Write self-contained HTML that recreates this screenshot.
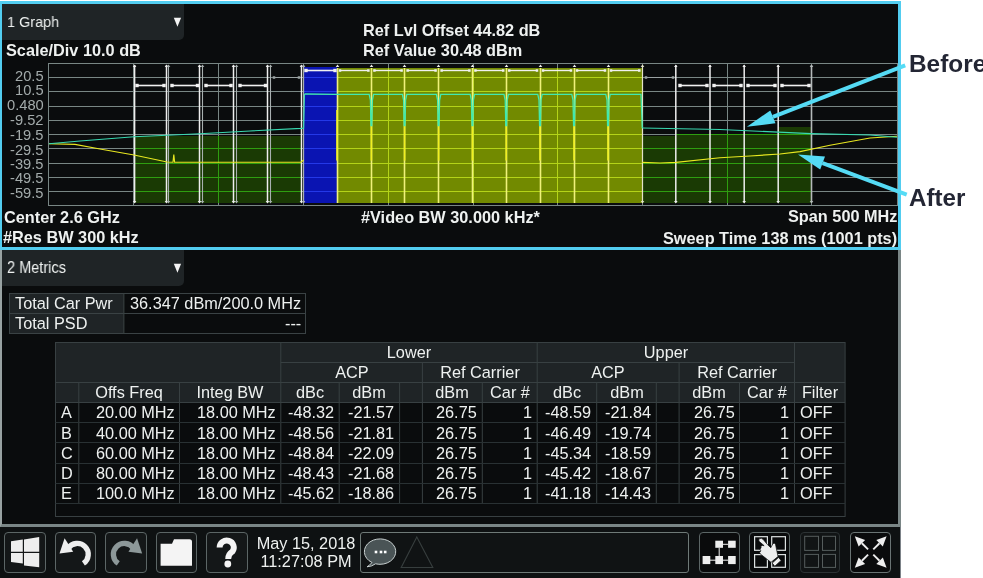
<!DOCTYPE html>
<html><head><meta charset="utf-8"><style>
html,body{margin:0;padding:0;width:983px;height:578px;overflow:hidden;background:#ffffff;position:relative;font-family:"Liberation Sans", sans-serif;}
.t{position:absolute;white-space:pre;font-family:"Liberation Sans", sans-serif;will-change:transform;}
svg{overflow:visible}
</style></head><body>
<div style="position:absolute;left:0;top:1px;width:901px;height:249px;box-sizing:border-box;border:3px solid #52cdf0;border-left-width:2px;background:#0a0c0d"></div><div style="position:absolute;left:0;top:250px;width:901px;height:277px;box-sizing:border-box;border-left:2px solid #98a2a2;border-right:3px solid #7a8686;border-bottom:3px solid #7a8686;background:#0a0c0d"></div><div style="position:absolute;left:0;top:527px;width:901px;height:51px;box-sizing:border-box;border-right:1px solid #7c8288;background:#0e1112"></div><div style="position:absolute;left:2px;top:4px;width:182px;height:36px;background:#1f2426;border-bottom-right-radius:5px"></div><div style="position:absolute;left:2px;top:250px;width:182px;height:36px;background:#1f2426;border-bottom-right-radius:5px"></div><svg style="position:absolute;left:0;top:0" width="983" height="578"><polygon points="173.8,17.7 181.1,17.7 177.45,26.8" fill="#f4f4f4"/><polygon points="173.8,263.7 181.1,263.7 177.45,272.8" fill="#f4f4f4"/></svg><div class="t" style="left:7.30px;top:14.28px;font-size:15.5px;line-height:15.5px;color:#eef1f0;transform:scaleX(0.93);transform-origin:0 0;">1 Graph</div><div class="t" style="left:7.10px;top:260.03px;font-size:15.8px;line-height:15.8px;color:#eef1f0;transform:scaleX(0.92);transform-origin:0 0;">2 Metrics</div><div class="t" style="left:5.80px;top:41.70px;font-size:16.3px;line-height:16.3px;color:#eef1f0;font-weight:bold;">Scale/Div 10.0 dB</div><div class="t" style="left:363.10px;top:21.50px;font-size:16.3px;line-height:16.3px;color:#eef1f0;font-weight:bold;">Ref Lvl Offset 44.82 dB</div><div class="t" style="left:363.10px;top:41.60px;font-size:16.3px;line-height:16.3px;color:#eef1f0;font-weight:bold;">Ref Value 30.48 dBm</div><div class="t" style="left:3.60px;top:208.60px;font-size:16.3px;line-height:16.3px;color:#eef1f0;font-weight:bold;">Center 2.6 GHz</div><div class="t" style="left:3.00px;top:229.30px;font-size:16.3px;line-height:16.3px;color:#eef1f0;font-weight:bold;">#Res BW 300 kHz</div><div class="t" style="left:361.40px;top:208.60px;font-size:16.3px;line-height:16.3px;color:#eef1f0;font-weight:bold;">#Video BW 30.000 kHz*</div><div class="t" style="right:85.60px;top:208.30px;font-size:16.3px;line-height:16.3px;color:#eef1f0;font-weight:bold;">Span 500 MHz</div><div class="t" style="right:86.40px;top:229.50px;font-size:16.3px;line-height:16.3px;color:#eef1f0;font-weight:bold;">Sweep Time 138 ms (1001 pts)</div><div class="t" style="right:939.20px;top:68.96px;font-size:14.7px;line-height:14.7px;color:#a3abab;">20.5</div><div class="t" style="right:939.20px;top:83.36px;font-size:14.7px;line-height:14.7px;color:#a3abab;">10.5</div><div class="t" style="right:939.20px;top:98.36px;font-size:14.7px;line-height:14.7px;color:#a3abab;">0.480</div><div class="t" style="right:939.20px;top:112.96px;font-size:14.7px;line-height:14.7px;color:#a3abab;">-9.52</div><div class="t" style="right:939.20px;top:127.96px;font-size:14.7px;line-height:14.7px;color:#a3abab;">-19.5</div><div class="t" style="right:939.20px;top:142.56px;font-size:14.7px;line-height:14.7px;color:#a3abab;">-29.5</div><div class="t" style="right:939.20px;top:156.96px;font-size:14.7px;line-height:14.7px;color:#a3abab;">-39.5</div><div class="t" style="right:939.20px;top:171.26px;font-size:14.7px;line-height:14.7px;color:#a3abab;">-49.5</div><div class="t" style="right:939.20px;top:186.26px;font-size:14.7px;line-height:14.7px;color:#a3abab;">-59.5</div><svg style="position:absolute;left:0;top:0" width="983" height="578"><rect x="48" y="63" width="850" height="1" fill="#788684"/><rect x="48" y="77" width="850" height="1" fill="#788684"/><rect x="48" y="91" width="850" height="1" fill="#788684"/><rect x="48" y="106" width="850" height="1" fill="#788684"/><rect x="48" y="120" width="850" height="1" fill="#788684"/><rect x="48" y="134" width="850" height="1" fill="#788684"/><rect x="48" y="148" width="850" height="1" fill="#788684"/><rect x="48" y="163" width="850" height="1" fill="#788684"/><rect x="48" y="177" width="850" height="1" fill="#788684"/><rect x="48" y="191" width="850" height="1" fill="#788684"/><rect x="48" y="205" width="850" height="1" fill="#788684"/><rect x="48" y="63" width="1" height="143" fill="#788684"/><rect x="133" y="63" width="1" height="143" fill="#788684"/><rect x="218" y="63" width="1" height="143" fill="#788684"/><rect x="303" y="63" width="1" height="143" fill="#788684"/><rect x="388" y="63" width="1" height="143" fill="#788684"/><rect x="473" y="63" width="1" height="143" fill="#788684"/><rect x="557" y="63" width="1" height="143" fill="#788684"/><rect x="642" y="63" width="1" height="143" fill="#788684"/><rect x="727" y="63" width="1" height="143" fill="#788684"/><rect x="811" y="63" width="1" height="143" fill="#788684"/><rect x="897" y="63" width="1" height="143" fill="#788684"/><rect x="134" y="136" width="167" height="67" fill="#1a3a04"/><rect x="134" y="148" width="167" height="1" fill="#2e9e10"/><rect x="134" y="163" width="167" height="1" fill="#2e9e10"/><rect x="134" y="177" width="167" height="1" fill="#2e9e10"/><rect x="134" y="191" width="167" height="1" fill="#2e9e10"/><rect x="218" y="136" width="1" height="67" fill="#2e9e10"/><rect x="643" y="136" width="33" height="67" fill="#1a3a04"/><rect x="643" y="148" width="33" height="1" fill="#2e9e10"/><rect x="643" y="163" width="33" height="1" fill="#2e9e10"/><rect x="643" y="177" width="33" height="1" fill="#2e9e10"/><rect x="643" y="191" width="33" height="1" fill="#2e9e10"/><rect x="676" y="134" width="102" height="69" fill="#1a3a04"/><rect x="676" y="134" width="102" height="1" fill="#2e9e10"/><rect x="676" y="148" width="102" height="1" fill="#2e9e10"/><rect x="676" y="163" width="102" height="1" fill="#2e9e10"/><rect x="676" y="177" width="102" height="1" fill="#2e9e10"/><rect x="676" y="191" width="102" height="1" fill="#2e9e10"/><rect x="727" y="134" width="1" height="69" fill="#2e9e10"/><rect x="778" y="127" width="33" height="76" fill="#1a3a04"/><rect x="778" y="134" width="33" height="1" fill="#2e9e10"/><rect x="778" y="148" width="33" height="1" fill="#2e9e10"/><rect x="778" y="163" width="33" height="1" fill="#2e9e10"/><rect x="778" y="177" width="33" height="1" fill="#2e9e10"/><rect x="778" y="191" width="33" height="1" fill="#2e9e10"/><rect x="304" y="67" width="33" height="136" fill="#0a14b2"/><rect x="304" y="77" width="33" height="1" fill="#2438e8"/><rect x="304" y="91" width="33" height="1" fill="#2438e8"/><rect x="304" y="106" width="33" height="1" fill="#2438e8"/><rect x="304" y="120" width="33" height="1" fill="#2438e8"/><rect x="304" y="134" width="33" height="1" fill="#2438e8"/><rect x="304" y="148" width="33" height="1" fill="#2438e8"/><rect x="304" y="163" width="33" height="1" fill="#2438e8"/><rect x="304" y="177" width="33" height="1" fill="#2438e8"/><rect x="304" y="191" width="33" height="1" fill="#2438e8"/><rect x="337" y="68" width="305" height="135" fill="#728a00"/><rect x="337" y="77" width="305" height="1" fill="#b4d418"/><rect x="337" y="91" width="305" height="1" fill="#b4d418"/><rect x="337" y="106" width="305" height="1" fill="#b4d418"/><rect x="337" y="120" width="305" height="1" fill="#b4d418"/><rect x="337" y="134" width="305" height="1" fill="#b4d418"/><rect x="337" y="148" width="305" height="1" fill="#b4d418"/><rect x="337" y="163" width="305" height="1" fill="#b4d418"/><rect x="337" y="177" width="305" height="1" fill="#b4d418"/><rect x="337" y="191" width="305" height="1" fill="#b4d418"/><rect x="388" y="68" width="1" height="135" fill="#b4d418"/><rect x="473" y="68" width="1" height="135" fill="#b4d418"/><rect x="557" y="68" width="1" height="135" fill="#b4d418"/><line x1="134.6" y1="65" x2="134.6" y2="202.5" stroke="#eeeeee" stroke-width="1.5"/><polygon points="132.79999999999998,67 136.4,67 134.6,64.5" fill="#eeeeee"/><polygon points="132.79999999999998,201 136.4,201 134.6,203.5" fill="#eeeeee"/><line x1="166.5" y1="65" x2="166.5" y2="202.5" stroke="#eeeeee" stroke-width="1.5"/><polygon points="164.7,67 168.3,67 166.5,64.5" fill="#eeeeee"/><polygon points="164.7,201 168.3,201 166.5,203.5" fill="#eeeeee"/><line x1="199.5" y1="65" x2="199.5" y2="202.5" stroke="#eeeeee" stroke-width="1.5"/><polygon points="197.7,67 201.3,67 199.5,64.5" fill="#eeeeee"/><polygon points="197.7,201 201.3,201 199.5,203.5" fill="#eeeeee"/><line x1="233.5" y1="65" x2="233.5" y2="202.5" stroke="#eeeeee" stroke-width="1.5"/><polygon points="231.7,67 235.3,67 233.5,64.5" fill="#eeeeee"/><polygon points="231.7,201 235.3,201 233.5,203.5" fill="#eeeeee"/><line x1="267.5" y1="65" x2="267.5" y2="202.5" stroke="#eeeeee" stroke-width="1.5"/><polygon points="265.7,67 269.3,67 267.5,64.5" fill="#eeeeee"/><polygon points="265.7,201 269.3,201 267.5,203.5" fill="#eeeeee"/><line x1="301.5" y1="65" x2="301.5" y2="202.5" stroke="#eeeeee" stroke-width="1.5"/><polygon points="299.7,67 303.3,67 301.5,64.5" fill="#eeeeee"/><polygon points="299.7,201 303.3,201 301.5,203.5" fill="#eeeeee"/><line x1="168.5" y1="65" x2="168.5" y2="202.5" stroke="#a8b0b0" stroke-width="1.1"/><polygon points="166.7,67 170.3,67 168.5,64.5" fill="#a8b0b0"/><polygon points="166.7,201 170.3,201 168.5,203.5" fill="#a8b0b0"/><line x1="202.5" y1="65" x2="202.5" y2="202.5" stroke="#a8b0b0" stroke-width="1.1"/><polygon points="200.7,67 204.3,67 202.5,64.5" fill="#a8b0b0"/><polygon points="200.7,201 204.3,201 202.5,203.5" fill="#a8b0b0"/><line x1="236.5" y1="65" x2="236.5" y2="202.5" stroke="#a8b0b0" stroke-width="1.1"/><polygon points="234.7,67 238.3,67 236.5,64.5" fill="#a8b0b0"/><polygon points="234.7,201 238.3,201 236.5,203.5" fill="#a8b0b0"/><line x1="270.5" y1="65" x2="270.5" y2="202.5" stroke="#a8b0b0" stroke-width="1.1"/><polygon points="268.7,67 272.3,67 270.5,64.5" fill="#a8b0b0"/><polygon points="268.7,201 272.3,201 270.5,203.5" fill="#a8b0b0"/><line x1="303.6" y1="65" x2="303.6" y2="202.5" stroke="#a8b0b0" stroke-width="1.1"/><polygon points="301.8,67 305.40000000000003,67 303.6,64.5" fill="#a8b0b0"/><polygon points="301.8,201 305.40000000000003,201 303.6,203.5" fill="#a8b0b0"/><line x1="675.8" y1="65" x2="675.8" y2="202.5" stroke="#eeeeee" stroke-width="1.5"/><polygon points="674.0,67 677.5999999999999,67 675.8,64.5" fill="#eeeeee"/><polygon points="674.0,201 677.5999999999999,201 675.8,203.5" fill="#eeeeee"/><line x1="710" y1="65" x2="710" y2="202.5" stroke="#eeeeee" stroke-width="1.5"/><polygon points="708.2,67 711.8,67 710,64.5" fill="#eeeeee"/><polygon points="708.2,201 711.8,201 710,203.5" fill="#eeeeee"/><line x1="744.2" y1="65" x2="744.2" y2="202.5" stroke="#eeeeee" stroke-width="1.5"/><polygon points="742.4000000000001,67 746.0,67 744.2,64.5" fill="#eeeeee"/><polygon points="742.4000000000001,201 746.0,201 744.2,203.5" fill="#eeeeee"/><line x1="778.2" y1="65" x2="778.2" y2="202.5" stroke="#eeeeee" stroke-width="1.5"/><polygon points="776.4000000000001,67 780.0,67 778.2,64.5" fill="#eeeeee"/><polygon points="776.4000000000001,201 780.0,201 778.2,203.5" fill="#eeeeee"/><line x1="642.5" y1="65" x2="642.5" y2="202.5" stroke="#e4e4c8" stroke-width="1.2"/><polygon points="640.7,67 644.3,67 642.5,64.5" fill="#e4e4c8"/><polygon points="640.7,201 644.3,201 642.5,203.5" fill="#e4e4c8"/><line x1="811.5" y1="65" x2="811.5" y2="202.5" stroke="#b4baba" stroke-width="1.6"/><polygon points="809.7,67 813.3,67 811.5,64.5" fill="#b4baba"/><polygon points="809.7,201 813.3,201 811.5,203.5" fill="#b4baba"/><line x1="337.5" y1="68" x2="337.5" y2="203" stroke="#f0f27a" stroke-width="1.6"/><polygon points="335.7,67 339.3,67 337.5,64.5" fill="#eeeeee"/><line x1="371.5" y1="68" x2="371.5" y2="203" stroke="#f0f27a" stroke-width="1.6"/><polygon points="369.7,67 373.3,67 371.5,64.5" fill="#eeeeee"/><line x1="404.5" y1="68" x2="404.5" y2="203" stroke="#f0f27a" stroke-width="1.6"/><polygon points="402.7,67 406.3,67 404.5,64.5" fill="#eeeeee"/><line x1="438.5" y1="68" x2="438.5" y2="203" stroke="#f0f27a" stroke-width="1.6"/><polygon points="436.7,67 440.3,67 438.5,64.5" fill="#eeeeee"/><line x1="472.5" y1="68" x2="472.5" y2="203" stroke="#f0f27a" stroke-width="1.6"/><polygon points="470.7,67 474.3,67 472.5,64.5" fill="#eeeeee"/><line x1="506.5" y1="68" x2="506.5" y2="203" stroke="#f0f27a" stroke-width="1.6"/><polygon points="504.7,67 508.3,67 506.5,64.5" fill="#eeeeee"/><line x1="540.5" y1="68" x2="540.5" y2="203" stroke="#f0f27a" stroke-width="1.6"/><polygon points="538.7,67 542.3,67 540.5,64.5" fill="#eeeeee"/><line x1="574.5" y1="68" x2="574.5" y2="203" stroke="#f0f27a" stroke-width="1.6"/><polygon points="572.7,67 576.3,67 574.5,64.5" fill="#eeeeee"/><line x1="608.5" y1="68" x2="608.5" y2="203" stroke="#f0f27a" stroke-width="1.6"/><polygon points="606.7,67 610.3,67 608.5,64.5" fill="#eeeeee"/><line x1="137" y1="85.5" x2="164" y2="85.5" stroke="#f0f0f0" stroke-width="1.6"/><rect x="135.3" y="83.8" width="3.4" height="3.4" fill="#f0f0f0"/><rect x="162.3" y="83.8" width="3.4" height="3.4" fill="#f0f0f0"/><line x1="172" y1="85.5" x2="197.5" y2="85.5" stroke="#f0f0f0" stroke-width="1.6"/><rect x="170.3" y="83.8" width="3.4" height="3.4" fill="#f0f0f0"/><rect x="195.8" y="83.8" width="3.4" height="3.4" fill="#f0f0f0"/><line x1="206" y1="85.5" x2="231" y2="85.5" stroke="#f0f0f0" stroke-width="1.6"/><rect x="204.3" y="83.8" width="3.4" height="3.4" fill="#f0f0f0"/><rect x="229.3" y="83.8" width="3.4" height="3.4" fill="#f0f0f0"/><line x1="240" y1="85.5" x2="265.5" y2="85.5" stroke="#f0f0f0" stroke-width="1.6"/><rect x="238.3" y="83.8" width="3.4" height="3.4" fill="#f0f0f0"/><rect x="263.8" y="83.8" width="3.4" height="3.4" fill="#f0f0f0"/><line x1="680" y1="85.5" x2="707" y2="85.5" stroke="#f0f0f0" stroke-width="1.6"/><rect x="678.3" y="83.8" width="3.4" height="3.4" fill="#f0f0f0"/><rect x="705.3" y="83.8" width="3.4" height="3.4" fill="#f0f0f0"/><line x1="714" y1="85.5" x2="741" y2="85.5" stroke="#f0f0f0" stroke-width="1.6"/><rect x="712.3" y="83.8" width="3.4" height="3.4" fill="#f0f0f0"/><rect x="739.3" y="83.8" width="3.4" height="3.4" fill="#f0f0f0"/><line x1="748" y1="85.5" x2="775" y2="85.5" stroke="#f0f0f0" stroke-width="1.6"/><rect x="746.3" y="83.8" width="3.4" height="3.4" fill="#f0f0f0"/><rect x="773.3" y="83.8" width="3.4" height="3.4" fill="#f0f0f0"/><line x1="782" y1="85.5" x2="809" y2="85.5" stroke="#f0f0f0" stroke-width="1.6"/><rect x="780.3" y="83.8" width="3.4" height="3.4" fill="#f0f0f0"/><rect x="807.3" y="83.8" width="3.4" height="3.4" fill="#f0f0f0"/><line x1="274" y1="77.5" x2="299" y2="77.5" stroke="#9aa2a2" stroke-width="1.0"/><rect x="272.75" y="76.25" width="2.5" height="2.5" fill="#9aa2a2"/><rect x="297.75" y="76.25" width="2.5" height="2.5" fill="#9aa2a2"/><line x1="646" y1="77.5" x2="673" y2="77.5" stroke="#9aa2a2" stroke-width="1.0"/><rect x="644.75" y="76.25" width="2.5" height="2.5" fill="#9aa2a2"/><rect x="671.75" y="76.25" width="2.5" height="2.5" fill="#9aa2a2"/><line x1="306" y1="70.5" x2="335" y2="70.5" stroke="#f0f0f0" stroke-width="1.6"/><rect x="304.3" y="68.8" width="3.4" height="3.4" fill="#f0f0f0"/><rect x="333.3" y="68.8" width="3.4" height="3.4" fill="#f0f0f0"/><line x1="340" y1="70.5" x2="368.4" y2="70.5" stroke="#f0f0f0" stroke-width="1.4"/><rect x="338.75" y="69.25" width="2.5" height="2.5" fill="#f0f0f0"/><rect x="367.15" y="69.25" width="2.5" height="2.5" fill="#f0f0f0"/><line x1="374.4" y1="70.5" x2="401.6" y2="70.5" stroke="#f0f0f0" stroke-width="1.4"/><rect x="373.15" y="69.25" width="2.5" height="2.5" fill="#f0f0f0"/><rect x="400.35" y="69.25" width="2.5" height="2.5" fill="#f0f0f0"/><line x1="407.6" y1="70.5" x2="435.6" y2="70.5" stroke="#f0f0f0" stroke-width="1.4"/><rect x="406.35" y="69.25" width="2.5" height="2.5" fill="#f0f0f0"/><rect x="434.35" y="69.25" width="2.5" height="2.5" fill="#f0f0f0"/><line x1="441.6" y1="70.5" x2="469.4" y2="70.5" stroke="#f0f0f0" stroke-width="1.4"/><rect x="440.35" y="69.25" width="2.5" height="2.5" fill="#f0f0f0"/><rect x="468.15" y="69.25" width="2.5" height="2.5" fill="#f0f0f0"/><line x1="475.4" y1="70.5" x2="503.2" y2="70.5" stroke="#f0f0f0" stroke-width="1.4"/><rect x="474.15" y="69.25" width="2.5" height="2.5" fill="#f0f0f0"/><rect x="501.95" y="69.25" width="2.5" height="2.5" fill="#f0f0f0"/><line x1="509.2" y1="70.5" x2="537" y2="70.5" stroke="#f0f0f0" stroke-width="1.4"/><rect x="507.95" y="69.25" width="2.5" height="2.5" fill="#f0f0f0"/><rect x="535.75" y="69.25" width="2.5" height="2.5" fill="#f0f0f0"/><line x1="543" y1="70.5" x2="571" y2="70.5" stroke="#f0f0f0" stroke-width="1.4"/><rect x="541.75" y="69.25" width="2.5" height="2.5" fill="#f0f0f0"/><rect x="569.75" y="69.25" width="2.5" height="2.5" fill="#f0f0f0"/><line x1="577" y1="70.5" x2="605" y2="70.5" stroke="#f0f0f0" stroke-width="1.4"/><rect x="575.75" y="69.25" width="2.5" height="2.5" fill="#f0f0f0"/><rect x="603.75" y="69.25" width="2.5" height="2.5" fill="#f0f0f0"/><line x1="611" y1="70.5" x2="639.3" y2="70.5" stroke="#f0f0f0" stroke-width="1.4"/><rect x="609.75" y="69.25" width="2.5" height="2.5" fill="#f0f0f0"/><rect x="638.05" y="69.25" width="2.5" height="2.5" fill="#f0f0f0"/><polyline points="49.0,143.8 75.0,144.4 100.0,149.0 134.0,155.0 167.0,162.0 173.0,162.2 173.8,154.5 174.6,162.2 301.0,162.2 303.6,160.0" fill="none" stroke="#e8e820" stroke-width="1.15"/><polyline points="49.0,143.8 80.0,141.0 134.0,136.8 200.0,133.7 250.0,131.0 301.0,128.4 303.6,128.0 304.5,94.0" fill="none" stroke="#38d8b0" stroke-width="1.15"/><line x1="337" y1="110" x2="337" y2="160.6" stroke="#f0f020" stroke-width="1.6"/><line x1="371.4" y1="110" x2="371.4" y2="160.6" stroke="#f0f020" stroke-width="1.6"/><line x1="404.6" y1="110" x2="404.6" y2="160.6" stroke="#f0f020" stroke-width="1.6"/><line x1="438.6" y1="110" x2="438.6" y2="160.6" stroke="#f0f020" stroke-width="1.6"/><line x1="472.4" y1="110" x2="472.4" y2="160.6" stroke="#f0f020" stroke-width="1.6"/><line x1="506.2" y1="110" x2="506.2" y2="160.6" stroke="#f0f020" stroke-width="1.6"/><line x1="540" y1="110" x2="540" y2="160.6" stroke="#f0f020" stroke-width="1.6"/><line x1="574" y1="110" x2="574" y2="160.6" stroke="#f0f020" stroke-width="1.6"/><line x1="608" y1="110" x2="608" y2="160.6" stroke="#f0f020" stroke-width="1.6"/><polyline points="304.5,94.0 336.0,94.3 369.2,94.3 370.4,100.0 371.0,125.5 371.8,125.5 372.4,100.0 373.6,94.3 402.4,94.3 403.6,100.0 404.2,125.5 405.0,125.5 405.6,100.0 406.8,94.3 436.4,94.3 437.6,100.0 438.2,125.5 439.0,125.5 439.6,100.0 440.8,94.3 470.2,94.3 471.4,100.0 472.0,125.5 472.8,125.5 473.4,100.0 474.6,94.3 504.0,94.3 505.2,100.0 505.8,125.5 506.6,125.5 507.2,100.0 508.4,94.3 537.8,94.3 539.0,100.0 539.6,125.5 540.4,125.5 541.0,100.0 542.2,94.3 571.8,94.3 573.0,100.0 573.6,125.5 574.4,125.5 575.0,100.0 576.2,94.3 605.8,94.3 607.0,100.0 607.6,125.5 608.4,125.5 609.0,100.0 610.2,94.3 641.0,94.3 642.3,128.0" fill="none" stroke="#40e8b0" stroke-width="1.3"/><polyline points="642.3,162.4 660.0,163.0 676.0,162.4 720.0,157.8 750.0,156.0 780.0,154.0 800.0,151.6 830.0,145.2 870.0,138.0 897.0,136.2" fill="none" stroke="#e8e820" stroke-width="1.15"/><polyline points="642.3,128.0 720.0,129.5 811.0,133.6 870.0,135.0 897.0,137.3" fill="none" stroke="#38d8b0" stroke-width="1.15"/></svg><svg style="position:absolute;left:0;top:0" width="983" height="578"><line x1="905.2" y1="65.4" x2="772.9" y2="116.85" stroke="#55dbf5" stroke-width="4"/><polygon points="746.9,126.8 770.3,110.4 775.5,123.3" fill="#55dbf5"/><line x1="906.7" y1="194.6" x2="822.6" y2="163.05" stroke="#55dbf5" stroke-width="4"/><polygon points="798,154.4 825,156.5 820.2,169.6" fill="#55dbf5"/></svg><div class="t" style="left:908.80px;top:52.63px;font-size:23px;line-height:23px;color:#232634;font-weight:bold;transform:scaleX(1.06);transform-origin:0 0;">Before</div><div class="t" style="left:908.90px;top:186.73px;font-size:23px;line-height:23px;color:#232634;font-weight:bold;transform:scaleX(1.05);transform-origin:0 0;">After</div><div style="position:absolute;left:9px;top:293px;width:115px;height:40.5px;background:#1f2426"></div><svg style="position:absolute;left:0;top:0" width="983" height="578"><rect x="9.5" y="293.5" width="296" height="40" fill="none" stroke="#3a4244" stroke-width="1"/><line x1="9.5" y1="313.5" x2="305.5" y2="313.5" stroke="#3a4244" stroke-width="1"/><line x1="123.9" y1="293.5" x2="123.9" y2="333.5" stroke="#3a4244" stroke-width="1"/></svg><div class="t" style="left:14.70px;top:295.20px;font-size:16.3px;line-height:16.3px;color:#eef1f0;">Total Car Pwr</div><div class="t" style="left:14.70px;top:315.20px;font-size:16.3px;line-height:16.3px;color:#eef1f0;">Total PSD</div><div class="t" style="right:682.20px;top:295.20px;font-size:16.3px;line-height:16.3px;color:#eef1f0;">36.347 dBm/200.0 MHz</div><div class="t" style="right:682.20px;top:315.20px;font-size:16.3px;line-height:16.3px;color:#eef1f0;">---</div><svg style="position:absolute;left:0;top:0" width="983" height="578"><rect x="55.5" y="342" width="789.6" height="60.5" fill="#1f2426"/><rect x="55.5" y="342.5" width="789.6" height="174.0" fill="none" stroke="#384042" stroke-width="1"/><line x1="280.8" y1="362.5" x2="794.5" y2="362.5" stroke="#384042"/><line x1="55.5" y1="382.5" x2="845.1" y2="382.5" stroke="#384042"/><line x1="55.5" y1="402.5" x2="845.1" y2="402.5" stroke="#384042"/><line x1="280.8" y1="342" x2="280.8" y2="503.5" stroke="#384042"/><line x1="537.2" y1="342" x2="537.2" y2="503.5" stroke="#384042"/><line x1="794.5" y1="342" x2="794.5" y2="503.5" stroke="#384042"/><line x1="422.4" y1="362.5" x2="422.4" y2="503.5" stroke="#384042"/><line x1="679.1" y1="362.5" x2="679.1" y2="503.5" stroke="#384042"/><line x1="78.8" y1="382.5" x2="78.8" y2="503.5" stroke="#384042"/><line x1="179.5" y1="382.5" x2="179.5" y2="503.5" stroke="#384042"/><line x1="339.2" y1="382.5" x2="339.2" y2="503.5" stroke="#384042"/><line x1="399.6" y1="382.5" x2="399.6" y2="503.5" stroke="#384042"/><line x1="482.3" y1="382.5" x2="482.3" y2="503.5" stroke="#384042"/><line x1="596.7" y1="382.5" x2="596.7" y2="503.5" stroke="#384042"/><line x1="656.3" y1="382.5" x2="656.3" y2="503.5" stroke="#384042"/><line x1="739.5" y1="382.5" x2="739.5" y2="503.5" stroke="#384042"/><line x1="55.5" y1="422.5" x2="845.1" y2="422.5" stroke="#293133"/><line x1="55.5" y1="442.5" x2="845.1" y2="442.5" stroke="#293133"/><line x1="55.5" y1="463.5" x2="845.1" y2="463.5" stroke="#293133"/><line x1="55.5" y1="483.5" x2="845.1" y2="483.5" stroke="#293133"/><line x1="55.5" y1="503.5" x2="845.1" y2="503.5" stroke="#293133"/></svg><div class="t" style="left:309.00px;width:200px;text-align:center;top:343.50px;font-size:16.3px;line-height:16.3px;color:#eef1f0;">Lower</div><div class="t" style="left:565.85px;width:200px;text-align:center;top:343.50px;font-size:16.3px;line-height:16.3px;color:#eef1f0;">Upper</div><div class="t" style="left:281.60px;width:140px;text-align:center;top:363.60px;font-size:16.3px;line-height:16.3px;color:#eef1f0;">ACP</div><div class="t" style="left:409.80px;width:140px;text-align:center;top:363.60px;font-size:16.3px;line-height:16.3px;color:#eef1f0;">Ref Carrier</div><div class="t" style="left:538.15px;width:140px;text-align:center;top:363.60px;font-size:16.3px;line-height:16.3px;color:#eef1f0;">ACP</div><div class="t" style="left:666.80px;width:140px;text-align:center;top:363.60px;font-size:16.3px;line-height:16.3px;color:#eef1f0;">Ref Carrier</div><div class="t" style="left:59.15px;width:140px;text-align:center;top:384.40px;font-size:16.3px;line-height:16.3px;color:#eef1f0;">Offs Freq</div><div class="t" style="left:160.15px;width:140px;text-align:center;top:384.40px;font-size:16.3px;line-height:16.3px;color:#eef1f0;">Integ BW</div><div class="t" style="left:240.00px;width:140px;text-align:center;top:384.40px;font-size:16.3px;line-height:16.3px;color:#eef1f0;">dBc</div><div class="t" style="left:299.40px;width:140px;text-align:center;top:384.40px;font-size:16.3px;line-height:16.3px;color:#eef1f0;">dBm</div><div class="t" style="left:382.35px;width:140px;text-align:center;top:384.40px;font-size:16.3px;line-height:16.3px;color:#eef1f0;">dBm</div><div class="t" style="left:439.75px;width:140px;text-align:center;top:384.40px;font-size:16.3px;line-height:16.3px;color:#eef1f0;">Car #</div><div class="t" style="left:496.95px;width:140px;text-align:center;top:384.40px;font-size:16.3px;line-height:16.3px;color:#eef1f0;">dBc</div><div class="t" style="left:556.50px;width:140px;text-align:center;top:384.40px;font-size:16.3px;line-height:16.3px;color:#eef1f0;">dBm</div><div class="t" style="left:639.30px;width:140px;text-align:center;top:384.40px;font-size:16.3px;line-height:16.3px;color:#eef1f0;">dBm</div><div class="t" style="left:697.00px;width:140px;text-align:center;top:384.40px;font-size:16.3px;line-height:16.3px;color:#eef1f0;">Car #</div><div class="t" style="left:749.80px;width:140px;text-align:center;top:384.40px;font-size:16.3px;line-height:16.3px;color:#eef1f0;">Filter</div><div class="t" style="left:60.90px;top:404.40px;font-size:16.3px;line-height:16.3px;color:#eef1f0;">A</div><div class="t" style="right:808.70px;top:404.40px;font-size:16.3px;line-height:16.3px;color:#eef1f0;">20.00 MHz</div><div class="t" style="right:707.40px;top:404.40px;font-size:16.3px;line-height:16.3px;color:#eef1f0;">18.00 MHz</div><div class="t" style="right:649.00px;top:404.40px;font-size:16.3px;line-height:16.3px;color:#eef1f0;">-48.32</div><div class="t" style="right:588.60px;top:404.40px;font-size:16.3px;line-height:16.3px;color:#eef1f0;">-21.57</div><div class="t" style="right:505.90px;top:404.40px;font-size:16.3px;line-height:16.3px;color:#eef1f0;">26.75</div><div class="t" style="right:451.00px;top:404.40px;font-size:16.3px;line-height:16.3px;color:#eef1f0;">1</div><div class="t" style="right:391.50px;top:404.40px;font-size:16.3px;line-height:16.3px;color:#eef1f0;">-48.59</div><div class="t" style="right:331.90px;top:404.40px;font-size:16.3px;line-height:16.3px;color:#eef1f0;">-21.84</div><div class="t" style="right:248.70px;top:404.40px;font-size:16.3px;line-height:16.3px;color:#eef1f0;">26.75</div><div class="t" style="right:193.70px;top:404.40px;font-size:16.3px;line-height:16.3px;color:#eef1f0;">1</div><div class="t" style="left:800.20px;top:404.40px;font-size:16.3px;line-height:16.3px;color:#eef1f0;">OFF</div><div class="t" style="left:60.90px;top:424.60px;font-size:16.3px;line-height:16.3px;color:#eef1f0;">B</div><div class="t" style="right:808.70px;top:424.60px;font-size:16.3px;line-height:16.3px;color:#eef1f0;">40.00 MHz</div><div class="t" style="right:707.40px;top:424.60px;font-size:16.3px;line-height:16.3px;color:#eef1f0;">18.00 MHz</div><div class="t" style="right:649.00px;top:424.60px;font-size:16.3px;line-height:16.3px;color:#eef1f0;">-48.56</div><div class="t" style="right:588.60px;top:424.60px;font-size:16.3px;line-height:16.3px;color:#eef1f0;">-21.81</div><div class="t" style="right:505.90px;top:424.60px;font-size:16.3px;line-height:16.3px;color:#eef1f0;">26.75</div><div class="t" style="right:451.00px;top:424.60px;font-size:16.3px;line-height:16.3px;color:#eef1f0;">1</div><div class="t" style="right:391.50px;top:424.60px;font-size:16.3px;line-height:16.3px;color:#eef1f0;">-46.49</div><div class="t" style="right:331.90px;top:424.60px;font-size:16.3px;line-height:16.3px;color:#eef1f0;">-19.74</div><div class="t" style="right:248.70px;top:424.60px;font-size:16.3px;line-height:16.3px;color:#eef1f0;">26.75</div><div class="t" style="right:193.70px;top:424.60px;font-size:16.3px;line-height:16.3px;color:#eef1f0;">1</div><div class="t" style="left:800.20px;top:424.60px;font-size:16.3px;line-height:16.3px;color:#eef1f0;">OFF</div><div class="t" style="left:60.90px;top:444.80px;font-size:16.3px;line-height:16.3px;color:#eef1f0;">C</div><div class="t" style="right:808.70px;top:444.80px;font-size:16.3px;line-height:16.3px;color:#eef1f0;">60.00 MHz</div><div class="t" style="right:707.40px;top:444.80px;font-size:16.3px;line-height:16.3px;color:#eef1f0;">18.00 MHz</div><div class="t" style="right:649.00px;top:444.80px;font-size:16.3px;line-height:16.3px;color:#eef1f0;">-48.84</div><div class="t" style="right:588.60px;top:444.80px;font-size:16.3px;line-height:16.3px;color:#eef1f0;">-22.09</div><div class="t" style="right:505.90px;top:444.80px;font-size:16.3px;line-height:16.3px;color:#eef1f0;">26.75</div><div class="t" style="right:451.00px;top:444.80px;font-size:16.3px;line-height:16.3px;color:#eef1f0;">1</div><div class="t" style="right:391.50px;top:444.80px;font-size:16.3px;line-height:16.3px;color:#eef1f0;">-45.34</div><div class="t" style="right:331.90px;top:444.80px;font-size:16.3px;line-height:16.3px;color:#eef1f0;">-18.59</div><div class="t" style="right:248.70px;top:444.80px;font-size:16.3px;line-height:16.3px;color:#eef1f0;">26.75</div><div class="t" style="right:193.70px;top:444.80px;font-size:16.3px;line-height:16.3px;color:#eef1f0;">1</div><div class="t" style="left:800.20px;top:444.80px;font-size:16.3px;line-height:16.3px;color:#eef1f0;">OFF</div><div class="t" style="left:60.90px;top:465.00px;font-size:16.3px;line-height:16.3px;color:#eef1f0;">D</div><div class="t" style="right:808.70px;top:465.00px;font-size:16.3px;line-height:16.3px;color:#eef1f0;">80.00 MHz</div><div class="t" style="right:707.40px;top:465.00px;font-size:16.3px;line-height:16.3px;color:#eef1f0;">18.00 MHz</div><div class="t" style="right:649.00px;top:465.00px;font-size:16.3px;line-height:16.3px;color:#eef1f0;">-48.43</div><div class="t" style="right:588.60px;top:465.00px;font-size:16.3px;line-height:16.3px;color:#eef1f0;">-21.68</div><div class="t" style="right:505.90px;top:465.00px;font-size:16.3px;line-height:16.3px;color:#eef1f0;">26.75</div><div class="t" style="right:451.00px;top:465.00px;font-size:16.3px;line-height:16.3px;color:#eef1f0;">1</div><div class="t" style="right:391.50px;top:465.00px;font-size:16.3px;line-height:16.3px;color:#eef1f0;">-45.42</div><div class="t" style="right:331.90px;top:465.00px;font-size:16.3px;line-height:16.3px;color:#eef1f0;">-18.67</div><div class="t" style="right:248.70px;top:465.00px;font-size:16.3px;line-height:16.3px;color:#eef1f0;">26.75</div><div class="t" style="right:193.70px;top:465.00px;font-size:16.3px;line-height:16.3px;color:#eef1f0;">1</div><div class="t" style="left:800.20px;top:465.00px;font-size:16.3px;line-height:16.3px;color:#eef1f0;">OFF</div><div class="t" style="left:60.90px;top:485.20px;font-size:16.3px;line-height:16.3px;color:#eef1f0;">E</div><div class="t" style="right:808.70px;top:485.20px;font-size:16.3px;line-height:16.3px;color:#eef1f0;">100.0 MHz</div><div class="t" style="right:707.40px;top:485.20px;font-size:16.3px;line-height:16.3px;color:#eef1f0;">18.00 MHz</div><div class="t" style="right:649.00px;top:485.20px;font-size:16.3px;line-height:16.3px;color:#eef1f0;">-45.62</div><div class="t" style="right:588.60px;top:485.20px;font-size:16.3px;line-height:16.3px;color:#eef1f0;">-18.86</div><div class="t" style="right:505.90px;top:485.20px;font-size:16.3px;line-height:16.3px;color:#eef1f0;">26.75</div><div class="t" style="right:451.00px;top:485.20px;font-size:16.3px;line-height:16.3px;color:#eef1f0;">1</div><div class="t" style="right:391.50px;top:485.20px;font-size:16.3px;line-height:16.3px;color:#eef1f0;">-41.18</div><div class="t" style="right:331.90px;top:485.20px;font-size:16.3px;line-height:16.3px;color:#eef1f0;">-14.43</div><div class="t" style="right:248.70px;top:485.20px;font-size:16.3px;line-height:16.3px;color:#eef1f0;">26.75</div><div class="t" style="right:193.70px;top:485.20px;font-size:16.3px;line-height:16.3px;color:#eef1f0;">1</div><div class="t" style="left:800.20px;top:485.20px;font-size:16.3px;line-height:16.3px;color:#eef1f0;">OFF</div><div style="position:absolute;left:4.2px;top:532px;width:41.599999999999994px;height:41px;box-sizing:border-box;border:1px solid #5c6666;border-radius:4px;background:#141718"></div><div style="position:absolute;left:55.4px;top:532px;width:40.4px;height:41px;box-sizing:border-box;border:1px solid #5c6666;border-radius:4px;background:#141718"></div><div style="position:absolute;left:105.2px;top:532px;width:41.7px;height:41px;box-sizing:border-box;border:1px solid #5c6666;border-radius:4px;background:#141718"></div><div style="position:absolute;left:156.2px;top:532px;width:41.0px;height:41px;box-sizing:border-box;border:1px solid #5c6666;border-radius:4px;background:#141718"></div><div style="position:absolute;left:206.2px;top:532px;width:41.70000000000002px;height:41px;box-sizing:border-box;border:1px solid #5c6666;border-radius:4px;background:#141718"></div><div style="position:absolute;left:359.5px;top:532px;width:329.5px;height:41px;box-sizing:border-box;border:1px solid #6f7a78;border-radius:3px;background:#101314"></div><div style="position:absolute;left:698.7px;top:532px;width:40.89999999999998px;height:41px;box-sizing:border-box;border:1px solid #5c6666;border-radius:4px;background:#0a0b0c"></div><div style="position:absolute;left:749.1px;top:532px;width:40.69999999999993px;height:41px;box-sizing:border-box;border:1px solid #5c6666;border-radius:4px;background:#0a0b0c"></div><div style="position:absolute;left:799.9px;top:532px;width:40.5px;height:41px;box-sizing:border-box;border:1px solid #2c3234;border-radius:4px;background:#111415"></div><div style="position:absolute;left:850.4px;top:532px;width:40.5px;height:41px;box-sizing:border-box;border:1px solid #6a7474;border-radius:4px;background:#0a0b0c"></div><svg style="position:absolute;left:0;top:0" width="983" height="578"><polygon points="11,541.2 22.8,539.6 22.8,551.8 11,551.8" fill="#eeeeee"/><polygon points="24,539.4 39.2,537 39.2,551.8 24,551.8" fill="#eeeeee"/><polygon points="11,553 22.8,553 22.8,563.6 11,562.1" fill="#eeeeee"/><polygon points="24,553 39.2,553 39.2,567.2 24,565.4" fill="#eeeeee"/><path d="M 68.26 548.3 A 10.9 10.9 0 1 1 83.4 563.4" fill="none" stroke="#eeeeee" stroke-width="5.3"/><polygon points="64.6,538.2 59.5,553.4 73.2,551.8" fill="#eeeeee"/><path d="M 133.39 548.3 A 10.9 10.9 0 1 0 118.25 563.4" fill="none" stroke="#8d9899" stroke-width="5.3"/><polygon points="137.05,538.2 142.15,553.4 128.45,551.8" fill="#8d9899"/><path d="M160.6,543.7 L172,543.7 L174,539.3 L189.5,539.3 Q192,539.3 192,541.8 L192,565.7 L160.6,565.7 Z" fill="#f4f4f4"/></svg><svg style="position:absolute;left:0;top:0" width="983" height="578"><path d="M 219.6 547.5 A 7.1 6.9 0 1 1 232.4 551.6 Q 228.2 554.2 228.2 559" stroke="#f4f4f4" stroke-width="5.9" fill="none"/><circle cx="227.8" cy="564" r="3.4" fill="#f4f4f4"/></svg><div class="t" style="left:235.75px;width:140px;text-align:center;top:535.00px;font-size:16.3px;line-height:16.3px;color:#eef1f0;">May 15, 2018</div><div class="t" style="left:236.00px;width:140px;text-align:center;top:553.30px;font-size:16.3px;line-height:16.3px;color:#eef1f0;">11:27:08 PM</div><svg style="position:absolute;left:0;top:0" width="983" height="578"><path d="M372,562.5 Q369,566 367,566.8 Q372,566.5 375.5,563.8 Q378.5,564.3 380,564.3 A15.7 12.7 0 1 0 372,562.5 Z" fill="#4a5456" stroke="#c8d0d0" stroke-width="1"/><rect x="374.7" y="550.7" width="2.6" height="2.6" fill="#ffffff"/><rect x="379.7" y="550.7" width="2.6" height="2.6" fill="#ffffff"/><rect x="383.9" y="550.7" width="2.6" height="2.6" fill="#ffffff"/><polygon points="416.8,536.9 401.2,567.5 432.8,567.5" fill="none" stroke="#373e3e" stroke-width="1.1"/><rect x="715.3" y="540.7" width="7.7000000000000455" height="7.099999999999909" fill="#eeeeee"/><rect x="728.1" y="540.7" width="7.600000000000023" height="7.099999999999909" fill="#eeeeee"/><rect x="702.6" y="556" width="7.699999999999932" height="8.100000000000023" fill="#eeeeee"/><rect x="715.3" y="556" width="7.7000000000000455" height="8.100000000000023" fill="#eeeeee"/><rect x="728.1" y="556" width="7.600000000000023" height="8.100000000000023" fill="#eeeeee"/><line x1="723" y1="544.3" x2="728.1" y2="544.3" stroke="#eeeeee" stroke-width="1"/><line x1="719.2" y1="547.8" x2="719.2" y2="556" stroke="#eeeeee" stroke-width="1"/><line x1="710" y1="560.2" x2="728.1" y2="560.2" stroke="#eeeeee" stroke-width="1"/><rect x="754.6" y="536.7" width="12.8" height="13.599999999999955" fill="none" stroke="#dde2e2" stroke-width="1.2"/><rect x="771.7" y="536.7" width="13.699999999999978" height="13.599999999999955" fill="none" stroke="#dde2e2" stroke-width="1.2"/><rect x="754.6" y="554.6" width="12.8" height="12.699999999999978" fill="none" stroke="#dde2e2" stroke-width="1.2"/><rect x="771.7" y="554.6" width="13.699999999999978" height="12.699999999999978" fill="none" stroke="#dde2e2" stroke-width="1.2"/><polygon points="761.55,538.31 763.22,539.52 767.41,544.55 770.83,547.74 772.73,543.94 774.26,543.02 775.55,544.55 777.30,553.07 778.06,556.49 770.98,562.35 760.18,553.83 759.57,552.31 760.94,550.94 760.02,549.26 761.09,547.74 760.79,546.22 762.46,545.46 764.13,545.69 759.26,541.50 758.65,539.98 759.57,538.61" fill="#eeeeee" stroke="#0a0b0c" stroke-width="0.7" stroke-linejoin="round"/><polygon points="772.20,563.12 778.44,557.48 781.18,560.38 774.79,566.16" fill="#eeeeee" stroke="#0a0b0c" stroke-width="0.7"/><rect x="804.7" y="536.3" width="13.799999999999955" height="14.100000000000023" fill="none" stroke="#555c5c" stroke-width="1"/><rect x="822.5" y="536.3" width="13" height="14.100000000000023" fill="none" stroke="#555c5c" stroke-width="1"/><rect x="804.7" y="554.4" width="13.799999999999955" height="13.0" fill="none" stroke="#555c5c" stroke-width="1"/><rect x="822.5" y="554.4" width="13" height="13.0" fill="none" stroke="#555c5c" stroke-width="1"/><polygon points="854.8,536.2 858.6,546.5 865.1,540.0" fill="#eeeeee"/><line x1="861.9" y1="543.3" x2="868.1" y2="549.4" stroke="#eeeeee" stroke-width="1.9"/><polygon points="886.6,536.2 876.3,540.0 882.8,546.5" fill="#eeeeee"/><line x1="879.5" y1="543.3" x2="873.3" y2="549.4" stroke="#eeeeee" stroke-width="1.9"/><polygon points="854.8,567.8 865.1,564.0 858.6,557.5" fill="#eeeeee"/><line x1="861.9" y1="560.7" x2="868.1" y2="554.6" stroke="#eeeeee" stroke-width="1.9"/><polygon points="886.6,567.8 882.8,557.5 876.3,564.0" fill="#eeeeee"/><line x1="879.5" y1="560.7" x2="873.3" y2="554.6" stroke="#eeeeee" stroke-width="1.9"/></svg>
</body></html>
